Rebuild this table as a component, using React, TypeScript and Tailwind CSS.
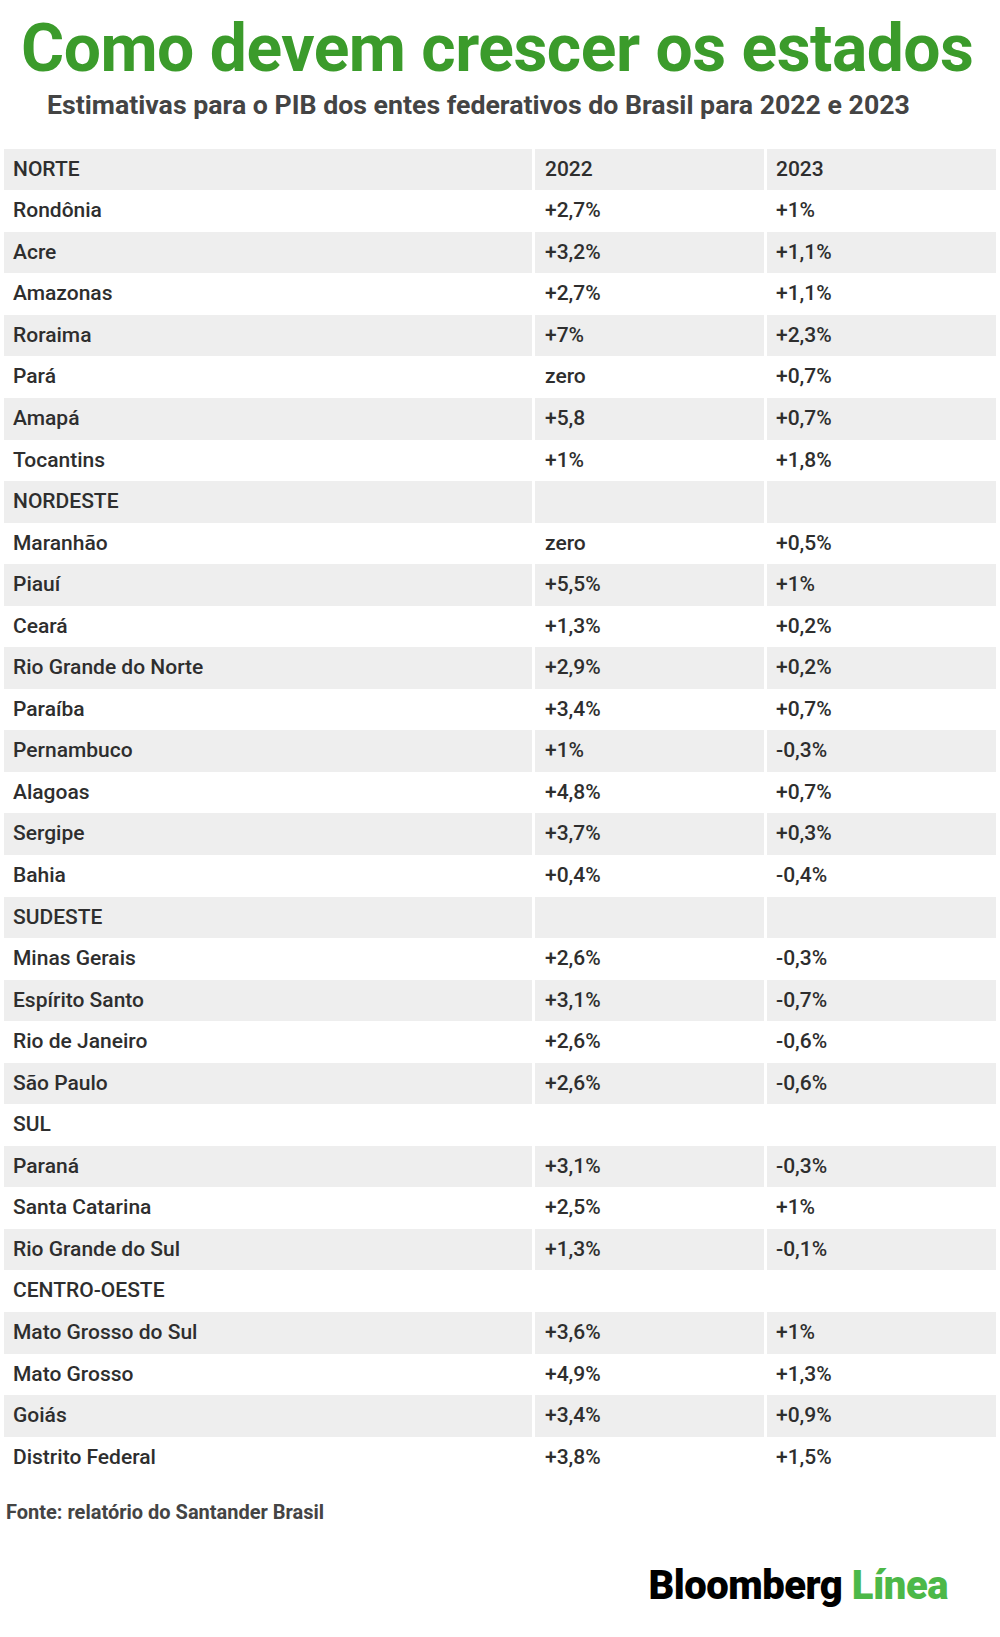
import React from "react"

type Row = [string, string, string]

const rows: Row[] = [
  ["NORTE", "2022", "2023"],
  ["Rondônia", "+2,7%", "+1%"],
  ["Acre", "+3,2%", "+1,1%"],
  ["Amazonas", "+2,7%", "+1,1%"],
  ["Roraima", "+7%", "+2,3%"],
  ["Pará", "zero", "+0,7%"],
  ["Amapá", "+5,8", "+0,7%"],
  ["Tocantins", "+1%", "+1,8%"],
  ["NORDESTE", "", ""],
  ["Maranhão", "zero", "+0,5%"],
  ["Piauí", "+5,5%", "+1%"],
  ["Ceará", "+1,3%", "+0,2%"],
  ["Rio Grande do Norte", "+2,9%", "+0,2%"],
  ["Paraíba", "+3,4%", "+0,7%"],
  ["Pernambuco", "+1%", "-0,3%"],
  ["Alagoas", "+4,8%", "+0,7%"],
  ["Sergipe", "+3,7%", "+0,3%"],
  ["Bahia", "+0,4%", "-0,4%"],
  ["SUDESTE", "", ""],
  ["Minas Gerais", "+2,6%", "-0,3%"],
  ["Espírito Santo", "+3,1%", "-0,7%"],
  ["Rio de Janeiro", "+2,6%", "-0,6%"],
  ["São Paulo", "+2,6%", "-0,6%"],
  ["SUL", "", ""],
  ["Paraná", "+3,1%", "-0,3%"],
  ["Santa Catarina", "+2,5%", "+1%"],
  ["Rio Grande do Sul", "+1,3%", "-0,1%"],
  ["CENTRO-OESTE", "", ""],
  ["Mato Grosso do Sul", "+3,6%", "+1%"],
  ["Mato Grosso", "+4,9%", "+1,3%"],
  ["Goiás", "+3,4%", "+0,9%"],
  ["Distrito Federal", "+3,8%", "+1,5%"],
]

export default function App() {
  return (
    <div className="w-[1000px] h-[1637px] bg-white font-['Roboto','Liberation_Sans',sans-serif] text-[#2e2e2e]">
      <h1 className="pt-[16px] pl-[21px] text-[66px] leading-none font-bold text-[#3b9b2b] tracking-[-0.5px] whitespace-nowrap">
        Como devem crescer os estados
      </h1>
      <p className="mt-[10px] pl-[47px] text-[26.7px] leading-none font-bold text-[#444444] whitespace-nowrap">
        Estimativas para o PIB dos entes federativos do Brasil para 2022 e 2023
      </p>

      <div className="mt-[30px] ml-[4px] grid grid-cols-[528px_229px_229px] gap-x-[3px] text-[21px] font-medium">
        {rows.map((r, i) => {
          const bg = i % 2 === 0 ? "bg-[#eeeeee]" : "bg-white"
          return (
            <React.Fragment key={i}>
              <div className={`${bg} h-[41.55px] flex items-center pl-[9px]`}>{r[0]}</div>
              <div className={`${bg} h-[41.55px] flex items-center pl-[10px]`}>{r[1]}</div>
              <div className={`${bg} h-[41.55px] flex items-center pl-[9px]`}>{r[2]}</div>
            </React.Fragment>
          )
        })}
      </div>

      <p className="mt-[24px] pl-[6px] text-[20px] leading-none font-bold text-[#444444]">
        Fonte: relatório do Santander Brasil
      </p>

      <div className="mt-[44px] flex justify-end pr-[52px]">
        <div className="text-[40px] leading-none font-black tracking-[-0.5px] whitespace-nowrap">
          <span className="text-black">Bloomberg</span>{" "}
          <span className="text-[#4cb848]">Línea</span>
        </div>
      </div>
    </div>
  )
}
